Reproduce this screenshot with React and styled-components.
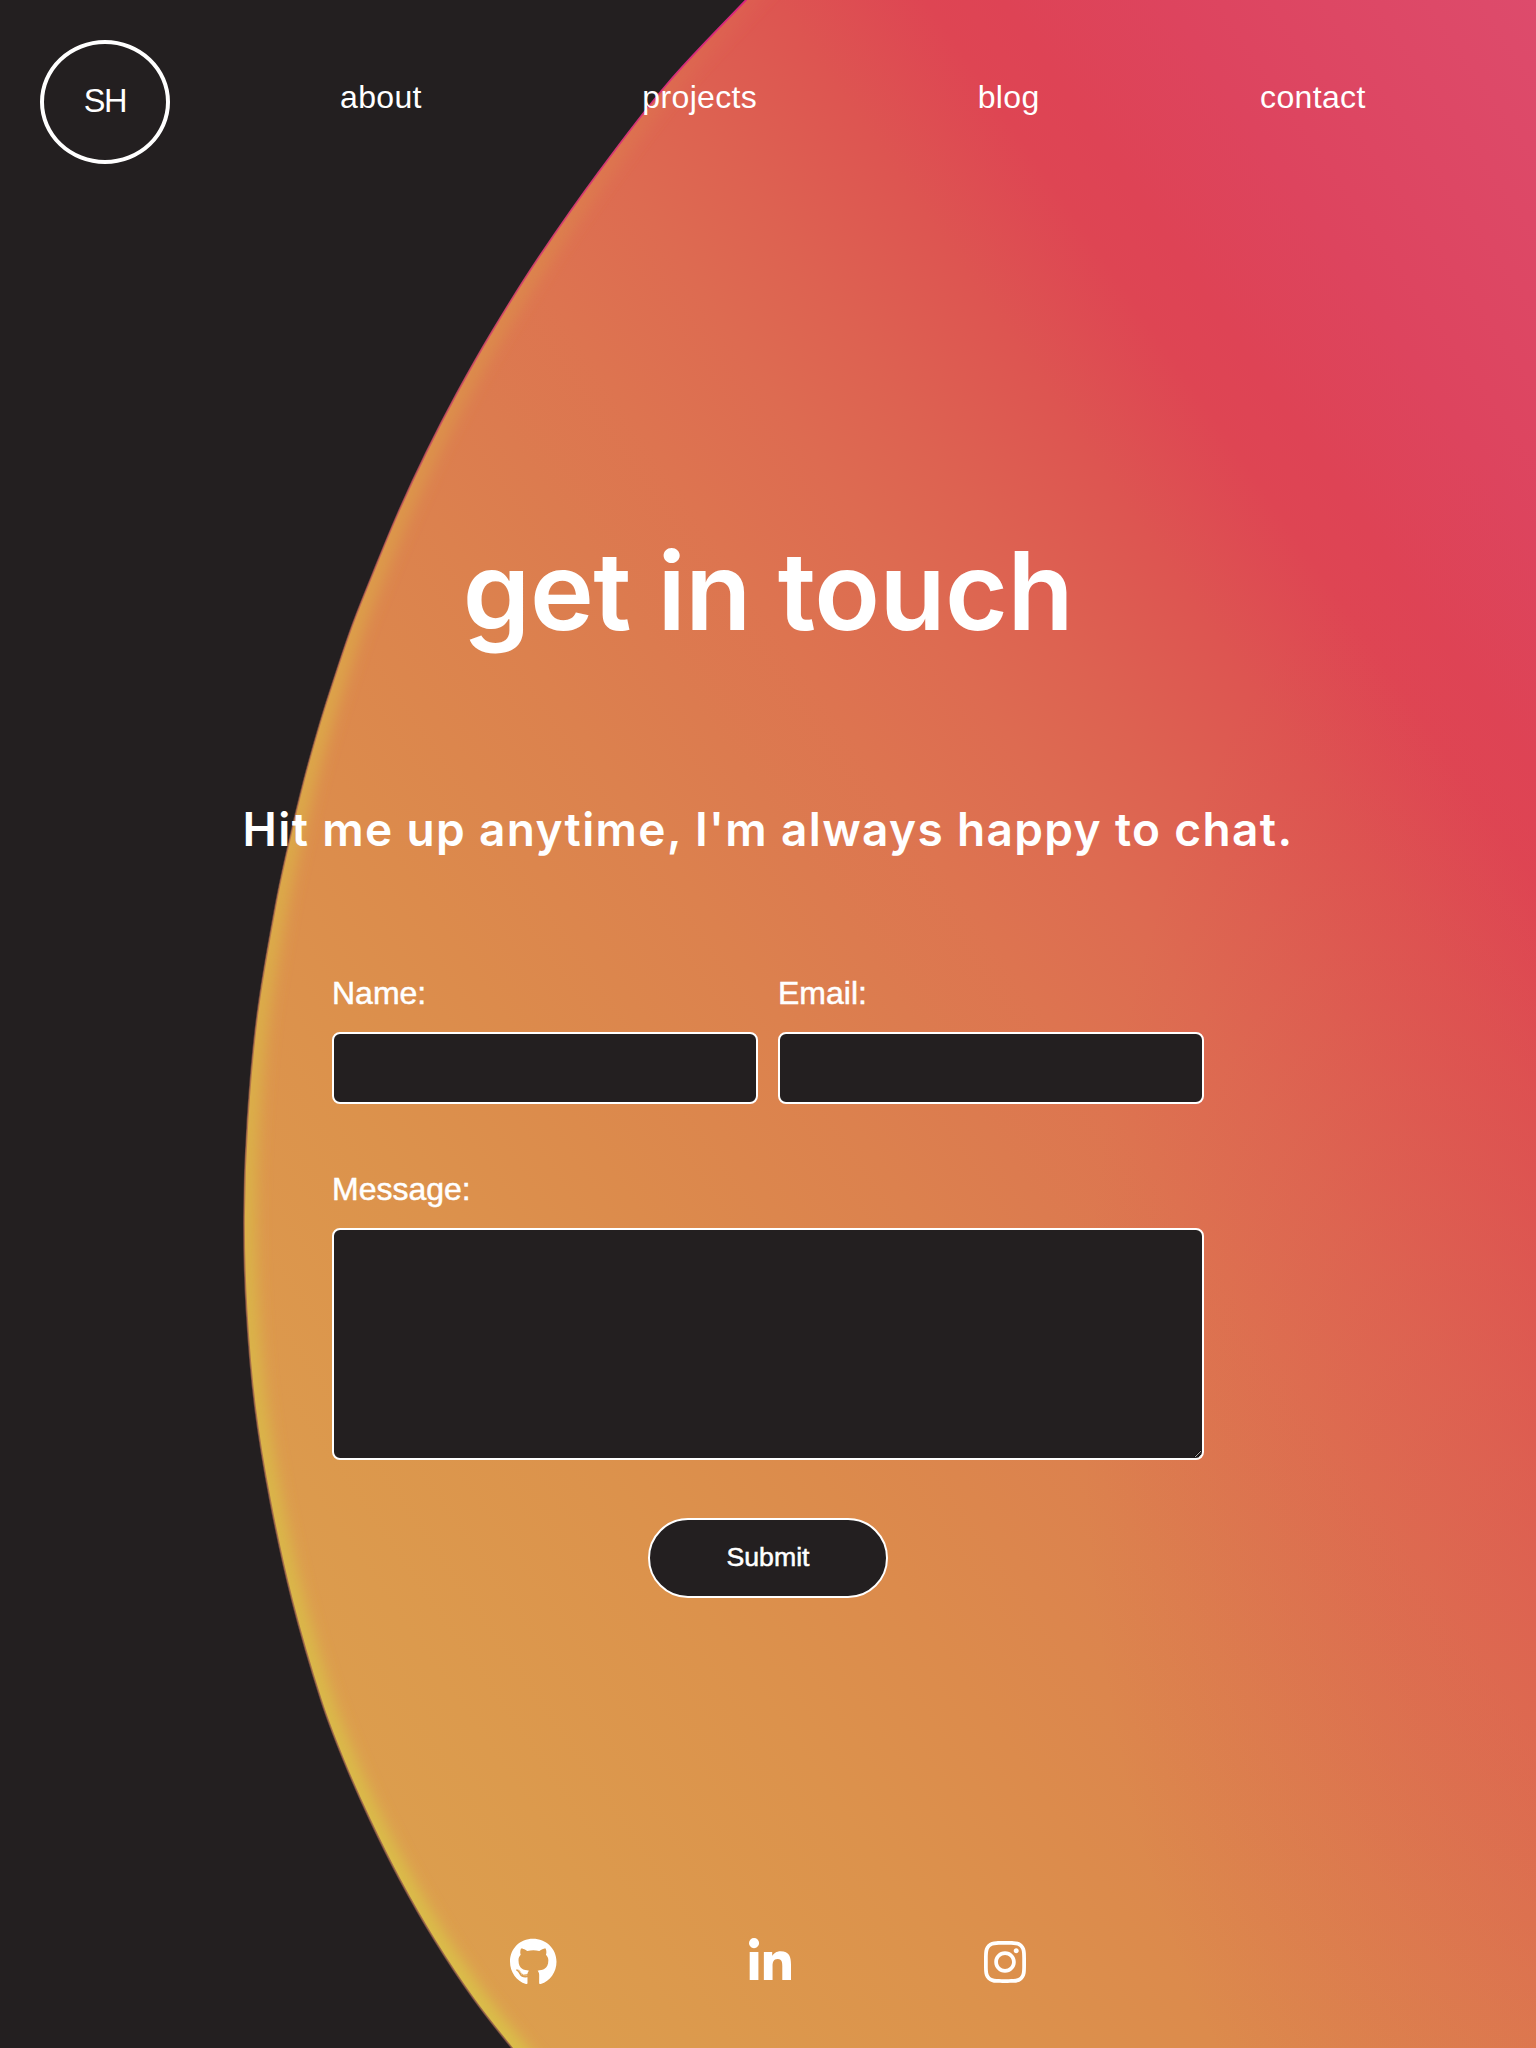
import React from "react";
import styled, { createGlobalStyle } from "styled-components";
import { FaGithub, FaLinkedinIn, FaInstagram } from "react-icons/fa";

const GlobalStyle = createGlobalStyle`
  *, *::before, *::after { box-sizing: border-box; }
  body {
    margin: 0;
    background: #231f20;
    color: #fff;
    font-family: "Liberation Sans", Arial, Helvetica, sans-serif;
  }
`;

const Page = styled.div`
  position: relative;
  isolation: isolate;
  display: flex;
  flex-direction: column;
  width: 1536px;
  height: 2048px;
  overflow: hidden;
  background: #231f20;
`;

const Backdrop = styled.svg`
  position: absolute;
  inset: 0;
  z-index: -1;
  width: 100%;
  height: 100%;
`;

const Header = styled.header`
  display: flex;
  align-items: flex-start;
  height: 531px;
  padding: 40px 0 0 40px;
`;

const Logo = styled.a`
  display: flex;
  align-items: center;
  justify-content: center;
  width: 130px;
  height: 124px;
  padding-bottom: 2px;
  border: 4px solid #fff;
  border-radius: 50%;
  font-size: 32.5px;
  letter-spacing: -1.4px;
`;

const Nav = styled.nav`
  display: flex;
  gap: 220.5px;
  padding: 37px 0 0 170px;
`;

const NavLink = styled.a`
  font-size: 32px;
  line-height: 40px;
  letter-spacing: 0.35px;
`;

const Title = styled.h1`
  margin: 0 0 148px;
  font: 600 108px/120px Inter, sans-serif;
  letter-spacing: -0.5px;
  text-align: center;
`;

const Subtitle = styled.h2`
  margin: 0;
  font: 600 46px/60px Inter, sans-serif;
  letter-spacing: 1.35px;
  text-align: center;
  white-space: nowrap;
`;

const Form = styled.form`
  display: flex;
  flex-direction: column;
  width: 872px;
  margin: 114px auto 0 332px;
`;

const FieldRow = styled.div`
  display: grid;
  grid-template-columns: 1fr 1fr;
  gap: 20px;
  margin-bottom: 65px;
`;

const Field = styled.label`
  display: flex;
  flex-direction: column;
  gap: 19px;
  font-size: 32px;
  line-height: 40px;
  -webkit-text-stroke: 0.5px #fff;
`;

const Input = styled.input`
  width: 100%;
  height: 72px;
  padding: 0 16px;
  border: 2px solid #fff;
  border-radius: 8px;
  background: #231f20;
  color: #fff;
  font: inherit;
`;

const TextArea = styled.textarea`
  width: 100%;
  height: 232px;
  padding: 16px;
  border: 2px solid #fff;
  border-radius: 8px;
  background: #231f20;
  color: #fff;
  font: inherit;
`;

const SubmitButton = styled.button`
  align-self: center;
  width: 240px;
  height: 80px;
  margin-top: 58px;
  padding: 0 0 2px;
  border: 2px solid #fff;
  border-radius: 40px;
  background: #231f20;
  color: #fff;
  font: 26.67px "Liberation Sans", Arial, sans-serif;
  -webkit-text-stroke: 0.5px #fff;
`;

const Footer = styled.footer`
  display: flex;
  gap: 192.5px;
  margin-top: 340px;
  padding-left: 510px;
`;

const SocialLink = styled.a`
  display: flex;
  svg {
    width: ${(p) => p.$width}px;
    height: 48px;
  }
`;

// [y, x] samples along the left rim of the glowing shape, top to bottom.
const RIM = [
  [-90, 833], [0, 746], [83, 668], [173, 598], [260, 537], [330, 493], [393, 457],
  [453, 426], [513, 398], [573, 373], [626, 352], [682, 333], [723, 320],
  [780, 304], [840, 289.5], [903, 276], [1013, 257.5], [1120, 247.5],
  [1217, 244], [1310, 246.5], [1407, 255], [1500, 270], [1600, 292],
  [1700, 321], [1760, 343.5], [1820, 370], [1880, 400], [1940, 434.5],
  [1998, 473], [2048, 512], [2120, 573],
];

function slopeAt(points, i) {
  const a = points[Math.max(i - 1, 0)];
  const b = points[Math.min(i + 1, points.length - 1)];
  return (b[1] - a[1]) / (b[0] - a[0]);
}

function smoothPath(points) {
  let d = `M${points[0][1]} ${points[0][0]}`;
  for (let i = 1; i < points.length; i++) {
    const [y0, x0] = points[i - 1];
    const [y1, x1] = points[i];
    const h = (y1 - y0) / 3;
    d += ` C${x0 + slopeAt(points, i - 1) * h} ${y0 + h}`;
    d += ` ${x1 - slopeAt(points, i) * h} ${y1 - h} ${x1} ${y1}`;
  }
  return d;
}

const rimPath = smoothPath(RIM);
const shapePath = `${rimPath} L1700 2120 L1700 -90 Z`;

const COLOR_STOPS = [
  [0.0, "#dca04e"],
  [0.1, "#dc9a4d"],
  [0.224, "#dc924c"],
  [0.308, "#dc8b4c"],
  [0.418, "#dc814e"],
  [0.47, "#dc7b4f"],
  [0.526, "#dd7450"],
  [0.587, "#dd6b51"],
  [0.635, "#dd6251"],
  [0.697, "#dd5551"],
  [0.757, "#de4553"],
  [0.787, "#de4355"],
  [0.853, "#dd445e"],
  [1, "#dd4b6c"],
];

function GlowBackdrop() {
  return (
    <Backdrop viewBox="0 0 1536 2048" aria-hidden="true">
      <defs>
        <linearGradient id="body" gradientUnits="userSpaceOnUse" x1="-658" y1="454" x2="1040" y2="-718">
          {COLOR_STOPS.map(([offset, color]) => (
            <stop key={offset} offset={offset} stopColor={color} />
          ))}
        </linearGradient>
        <radialGradient id="warmth" gradientUnits="userSpaceOnUse" cx="0" cy="0" r="1" gradientTransform="translate(1640 1400) scale(560 1000)">
          <stop offset="0" stopColor="#de4350" stopOpacity="0.36" />
          <stop offset="0.5" stopColor="#de4350" stopOpacity="0.2" />
          <stop offset="1" stopColor="#de4350" stopOpacity="0" />
        </radialGradient>
        <linearGradient id="glow" gradientUnits="userSpaceOnUse" x1="0" y1="0" x2="0" y2="2048">
          <stop offset="0" stopColor="#dd6a50" stopOpacity="0.3" />
          <stop offset="0.13" stopColor="#dc8a4b" stopOpacity="0.7" />
          <stop offset="0.35" stopColor="#dca549" />
          <stop offset="0.6" stopColor="#dab149" />
          <stop offset="1" stopColor="#dabe48" />
        </linearGradient>
        <linearGradient id="rim" gradientUnits="userSpaceOnUse" x1="0" y1="0" x2="0" y2="2048">
          <stop offset="0" stopColor="#d92680" />
          <stop offset="0.15" stopColor="#d5456b" stopOpacity="0.9" />
          <stop offset="0.35" stopColor="#a8624c" stopOpacity="0.6" />
          <stop offset="1" stopColor="#8a5648" stopOpacity="0.8" />
        </linearGradient>
        <clipPath id="shape">
          <path d={shapePath} />
        </clipPath>
        <filter id="soften" filterUnits="userSpaceOnUse" x="0" y="-100" width="1000" height="2250">
          <feGaussianBlur stdDeviation="7" />
        </filter>
      </defs>
      <path d={shapePath} fill="url(#body)" />
      <g clipPath="url(#shape)">
        <rect x="1000" y="300" width="536" height="1748" fill="url(#warmth)" />
        <path d={rimPath} fill="none" stroke="url(#glow)" strokeWidth="25" filter="url(#soften)" />
      </g>
      <path d={rimPath} fill="none" stroke="url(#rim)" strokeWidth="1.8" />
    </Backdrop>
  );
}

export default function App() {
  return (
    <>
      <GlobalStyle />
      <Page>
        <GlowBackdrop />
        <Header>
          <Logo>SH</Logo>
          <Nav>
            <NavLink>about</NavLink>
            <NavLink>projects</NavLink>
            <NavLink>blog</NavLink>
            <NavLink>contact</NavLink>
          </Nav>
        </Header>
        <Title>get in touch</Title>
        <Subtitle>Hit me up anytime, I'm always happy to chat.</Subtitle>
        <Form>
          <FieldRow>
            <Field>
              Name:
              <Input type="text" name="name" />
            </Field>
            <Field>
              Email:
              <Input type="email" name="email" />
            </Field>
          </FieldRow>
          <Field>
            Message:
            <TextArea name="message" />
          </Field>
          <SubmitButton type="button">Submit</SubmitButton>
        </Form>
        <Footer>
          <SocialLink $width={46.5} aria-label="GitHub">
            <FaGithub />
          </SocialLink>
          <SocialLink $width={42} aria-label="LinkedIn">
            <FaLinkedinIn />
          </SocialLink>
          <SocialLink $width={42} aria-label="Instagram">
            <FaInstagram />
          </SocialLink>
        </Footer>
      </Page>
    </>
  );
}
